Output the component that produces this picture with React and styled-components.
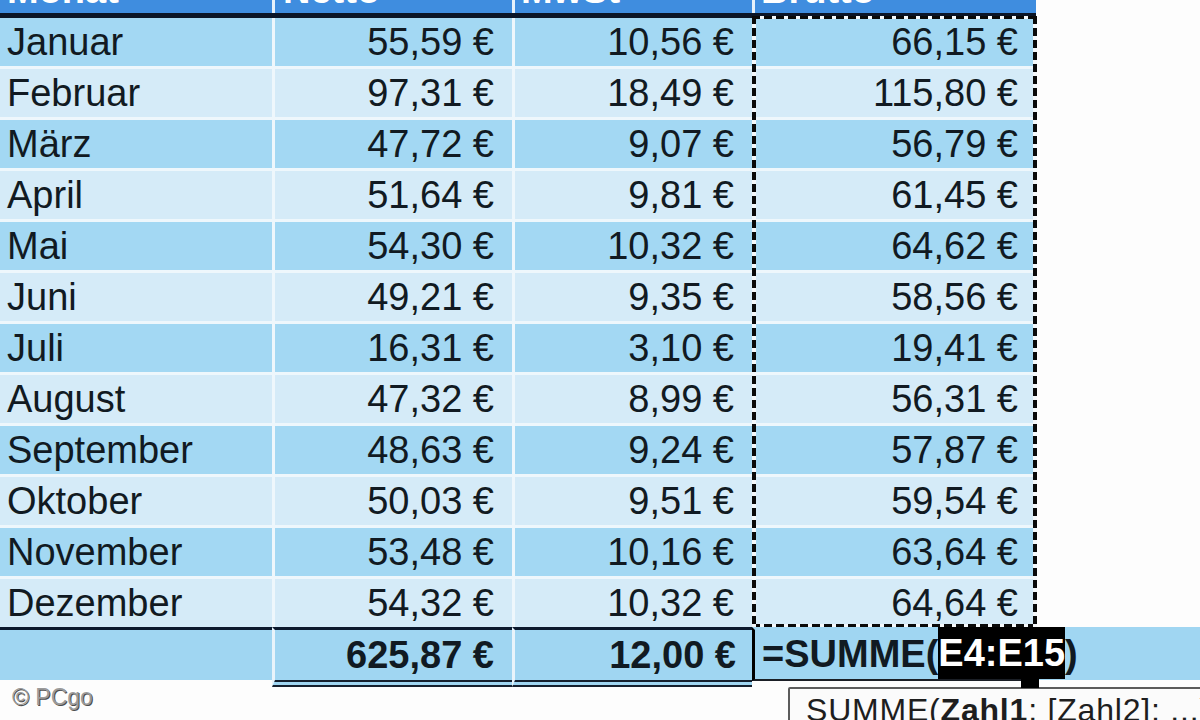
import React from 'react';
import styled, { createGlobalStyle } from 'styled-components';

const GlobalStyle = createGlobalStyle`
  html, body {
    margin: 0;
    padding: 0;
    background: #ffffff;
  }
  body {
    font-family: "Liberation Sans", Arial, sans-serif;
  }
`;

const COLS = '272px 237px 237px 281px';

const Page = styled.div`
  position: relative;
  width: 1200px;
  height: 720px;
  overflow: hidden;
  background: #fdfdfd;
  color: #111a22;
`;

const HeaderRow = styled.div`
  display: grid;
  grid-template-columns: ${COLS};
  column-gap: 3px;
  width: 1036px;
  height: 13px;
  background: #e6f1fb;
`;

const HeaderCell = styled.div`
  background: #3f8ddf;
  overflow: hidden;
  padding-left: ${(p) => p.$pad || 7}px;
`;

const HeaderLabel = styled.div`
  margin-top: -29px;
  font-size: 38px;
  line-height: 38px;
  font-weight: bold;
  color: #ffffff;
  white-space: nowrap;
`;

const HeaderRule = styled.div`
  width: 1036px;
  height: 5px;
  background: #0b1527;
`;

const Body = styled.div`
  position: relative;
  display: grid;
  row-gap: 3px;
  width: 1036px;
  background: #eef7fc;
`;

const DataRow = styled.div`
  display: grid;
  grid-template-columns: ${COLS};
  column-gap: 3px;
  height: 48px;
`;

const Cell = styled.div`
  display: flex;
  align-items: center;
  justify-content: ${(p) => (p.$num ? 'flex-end' : 'flex-start')};
  padding: ${(p) => (p.$num ? '0 18px 0 0' : '0 0 0 7px')};
  background: ${(p) => (p.$dark ? '#a3d8f3' : '#d5ebf8')};
  font-size: 38px;
  white-space: nowrap;
`;

const Marquee = styled.div`
  position: absolute;
  left: 752px;
  top: -2px;
  width: 285px;
  bottom: 0;
  pointer-events: none;
  background:
    repeating-linear-gradient(to bottom, #0a0a0a 0 8px, #f4f8fb 8px 12px) left top / 4px 100% no-repeat,
    repeating-linear-gradient(to bottom, #0a0a0a 0 8px, #f4f8fb 8px 12px) right top / 4px 100% no-repeat,
    repeating-linear-gradient(to right, #0a0a0a 0 8px, #f4f8fb 8px 12px) left top / 100% 3px no-repeat,
    repeating-linear-gradient(to right, #0a0a0a 0 8px, #f4f8fb 8px 12px) left bottom / 100% 3px no-repeat;
`;

const TotalRow = styled.div`
  display: grid;
  grid-template-columns: 272px 240px 240px 284px 1fr;
  align-items: start;
`;

const TotalCell = styled.div`
  display: flex;
  align-items: center;
  justify-content: flex-end;
  height: 50px;
  padding-right: ${(p) => p.$pr || 18}px;
  background: #a0d6f2;
  border-top: 3px solid #0d1a2e;
  border-left: ${(p) => (p.$grid ? '3px solid #e8f4fb' : '0')};
  border-bottom: ${(p) => (p.$double ? '7px double #15202e' : '0')};
  font-size: 38px;
  font-weight: bold;
  white-space: nowrap;
`;

const EditCell = styled.div`
  position: relative;
  z-index: 1;
  display: flex;
  align-items: stretch;
  height: 49px;
  padding-left: 7px;
  background: #a0d6f2;
  border-top: 3px solid #a0d6f2;
  border-left: 3px solid #000000;
  border-bottom: 2px solid #1b1f26;
  font-size: 38px;
  font-weight: bold;
  white-space: nowrap;
`;

const Plain = styled.span`
  display: flex;
  align-items: center;
`;

const RefMark = styled.span`
  position: relative;
  display: flex;
  align-items: center;
  margin-top: -3px;
  background: #000000;
  color: #ffffff;

  &::after {
    content: '';
    position: absolute;
    left: 83px;
    bottom: -9px;
    width: 18px;
    height: 9px;
    background: #000000;
  }
`;

const Filler = styled.div`
  height: 50px;
  background: #a0d6f2;
  border-top: 3px solid #a0d6f2;
`;

const Tooltip = styled.div`
  position: absolute;
  left: 788px;
  top: 687px;
  width: 460px;
  height: 60px;
  padding: 3px 0 0 16px;
  background: #fbfbfb;
  border: 2px solid #5c5c5c;
  border-radius: 2px;
  font-size: 32px;
  letter-spacing: 0.8px;
  color: #1e1e1e;
  white-space: nowrap;

  b {
    font-weight: bold;
  }
`;

const Watermark = styled.div`
  position: absolute;
  left: 12px;
  top: 684px;
  font-size: 23px;
  color: #9b9b9b;
  text-shadow: 1px 1px 0 #4d4d4d, -1px -1px 0 #ffffff;
`;

const rows = [
  ['Januar', '55,59', '10,56', '66,15'],
  ['Februar', '97,31', '18,49', '115,80'],
  ['März', '47,72', '9,07', '56,79'],
  ['April', '51,64', '9,81', '61,45'],
  ['Mai', '54,30', '10,32', '64,62'],
  ['Juni', '49,21', '9,35', '58,56'],
  ['Juli', '16,31', '3,10', '19,41'],
  ['August', '47,32', '8,99', '56,31'],
  ['September', '48,63', '9,24', '57,87'],
  ['Oktober', '50,03', '9,51', '59,54'],
  ['November', '53,48', '10,16', '63,64'],
  ['Dezember', '54,32', '10,32', '64,64'],
];

const euro = (v) => `${v}\u00a0€`;

export default function App() {
  return (
    <Page>
      <GlobalStyle />
      <HeaderRow>
        <HeaderCell><HeaderLabel>Monat</HeaderLabel></HeaderCell>
        <HeaderCell $pad={8}><HeaderLabel>Netto</HeaderLabel></HeaderCell>
        <HeaderCell $pad={6}><HeaderLabel>MwSt</HeaderLabel></HeaderCell>
        <HeaderCell $pad={6}><HeaderLabel>Brutto</HeaderLabel></HeaderCell>
      </HeaderRow>
      <HeaderRule />

      <Body>
        {rows.map(([month, net, tax, gross], i) => (
          <DataRow key={month}>
            <Cell $dark={i % 2 === 0}>{month}</Cell>
            <Cell $dark={i % 2 === 0} $num>{euro(net)}</Cell>
            <Cell $dark={i % 2 === 0} $num>{euro(tax)}</Cell>
            <Cell $dark={i % 2 === 0} $num>{euro(gross)}</Cell>
          </DataRow>
        ))}
        <Marquee />
      </Body>

      <TotalRow>
        <TotalCell />
        <TotalCell $grid $double>{euro('625,87')}</TotalCell>
        <TotalCell $grid $double $pr={16}>{euro('12,00')}</TotalCell>
        <EditCell>
          <Plain>=SUMME(</Plain>
          <RefMark>E4:E15</RefMark>
          <Plain>)</Plain>
        </EditCell>
        <Filler />
      </TotalRow>

      <Tooltip>
        SUMME(<b>Zahl1</b>; [Zahl2]; ...)
      </Tooltip>
      <Watermark>© PCgo</Watermark>
    </Page>
  );
}
